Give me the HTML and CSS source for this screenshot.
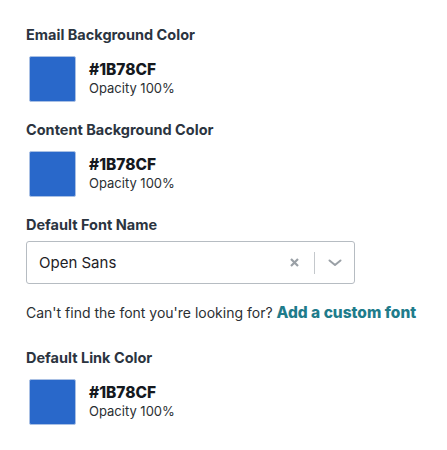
FILE: index.html
```html
<!DOCTYPE html>
<html>
<head>
<meta charset="utf-8">
<link rel="stylesheet" href="styles.css">
</head>
<body>
<div class="panel">
  <section class="field">
    <h3 class="label">Email Background Color</h3>
    <div class="color-row">
      <div class="swatch"></div>
      <div class="color-info">
        <div class="hex">#1B78CF</div>
        <div class="opacity">Opacity 100%</div>
      </div>
    </div>
  </section>
  <section class="field">
    <h3 class="label">Content Background Color</h3>
    <div class="color-row">
      <div class="swatch"></div>
      <div class="color-info">
        <div class="hex">#1B78CF</div>
        <div class="opacity">Opacity 100%</div>
      </div>
    </div>
  </section>
  <section class="field field-font">
    <h3 class="label">Default Font Name</h3>
    <div class="select">
      <span class="select-value">Open Sans</span>
      <span class="select-icons">
        <svg class="clear" width="9" height="9" viewBox="0 0 9 9"><path d="M1 1 L8 8 M8 1 L1 8" stroke="#9aa0a6" stroke-width="2.2" stroke-linecap="butt"/></svg>
        <span class="sep"></span>
        <svg class="chev" width="14" height="8" viewBox="0 0 14 8"><path d="M1.5 1.5 L7 6 L12.5 1.5" stroke="#9aa0a6" stroke-width="2" fill="none" stroke-linecap="round" stroke-linejoin="round"/></svg>
      </span>
    </div>
    <p class="help">Can't find the font you're looking for? <a class="link" href="#">Add a custom font</a></p>
  </section>
  <section class="field">
    <h3 class="label">Default Link Color</h3>
    <div class="color-row">
      <div class="swatch"></div>
      <div class="color-info">
        <div class="hex">#1B78CF</div>
        <div class="opacity">Opacity 100%</div>
      </div>
    </div>
  </section>
</div>
</body>
</html>
```
FILE: styles.css
```css
* { box-sizing: border-box; }
body {
  margin: 0;
  background: #ffffff;
  font-family: Inter, "Noto Sans", sans-serif;
  color: #1f2328;
}
.panel {
  padding: 25px 0 0 26px;
  width: 447px;
}
.field {
  margin: 0 0 18px 0;
}
.label {
  margin: 0;
  font-size: 14.5px;
  font-weight: 700;
  color: #2b3440;
  line-height: 20px;
}
.color-row {
  display: flex;
  align-items: flex-start;
  margin-top: 11px;
  margin-left: 3px;
}
.swatch {
  width: 47px;
  height: 46px;
  background: #2968ca;
  border: 1px solid #a9c0e4;
  border-radius: 2px;
}
.color-info {
  margin-left: 13px;
  padding-top: 5px;
}
.hex {
  font-size: 15.5px;
  font-weight: 800;
  line-height: 18px;
  color: #15191e;
}
.opacity {
  font-size: 13px;
  line-height: 18px;
  color: #2b2f33;
}
.field-font { margin-bottom: 26px; }
.select {
  margin-top: 6px;
  width: 329px;
  height: 43px;
  border: 1px solid #b6bcc2;
  border-radius: 3px;
  display: flex;
  align-items: center;
  justify-content: space-between;
  padding: 0 12px 0 12px;
}
.select-value {
  font-size: 15px;
  color: #1d2126;
}
.select-icons {
  display: flex;
  align-items: center;
}
.clear { margin-right: 15px; }
.sep {
  width: 1px;
  height: 22px;
  background: #c4c8cc;
  margin-right: 13px;
}
.help {
  margin: 19px 0 0 0;
  font-size: 14px;
  color: #2b2f33;
  line-height: 19px;
}
.link {
  color: #1f7c8b;
  font-weight: 800;
  font-size: 15.5px;
  text-decoration: none;
}
```
